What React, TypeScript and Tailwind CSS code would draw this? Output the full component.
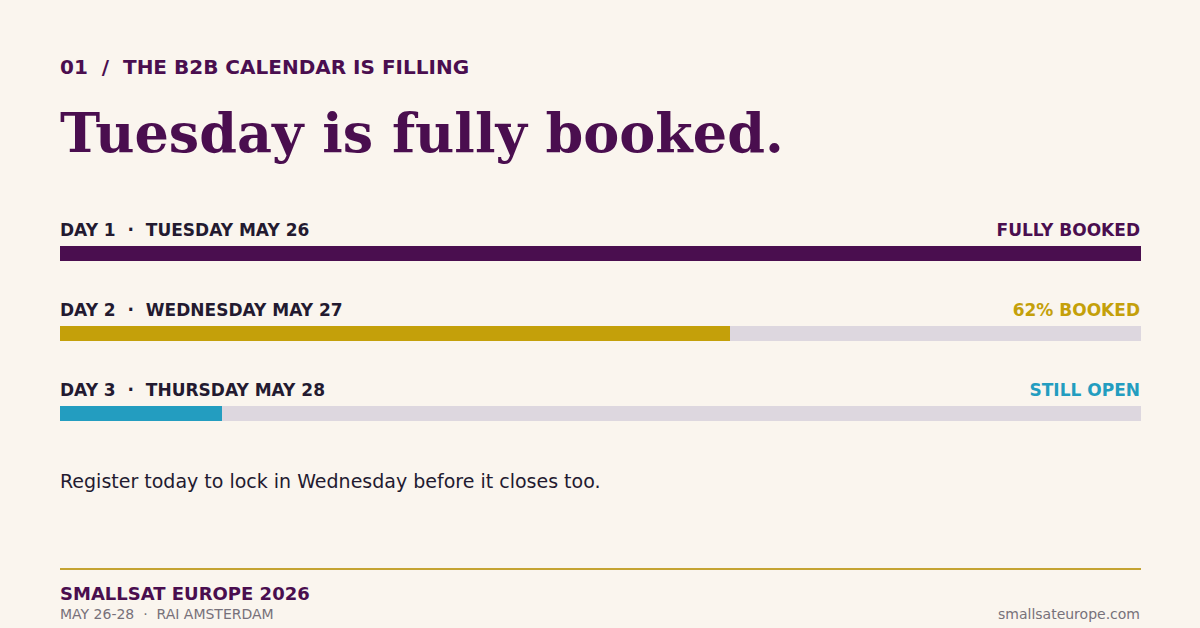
const days = [
  {
    label: "DAY 1  ·  TUESDAY MAY 26",
    status: "FULLY BOOKED",
    pct: 100,
    bar: "bg-[#4a0e4f]",
    text: "text-[#4a0e4f]",
  },
  {
    label: "DAY 2  ·  WEDNESDAY MAY 27",
    status: "62% BOOKED",
    pct: 62,
    bar: "bg-[#c4a00a]",
    text: "text-[#c4a00a]",
  },
  {
    label: "DAY 3  ·  THURSDAY MAY 28",
    status: "STILL OPEN",
    pct: 15,
    bar: "bg-[#239dc0]",
    text: "text-[#239dc0]",
  },
];

export default function App() {
  return (
    <div
      className="w-[1200px] h-[628px] overflow-hidden bg-[#faf5ee] pl-[60px] pr-[59px] pt-[55px]"
      style={{ fontFamily: '"DejaVu Sans", Verdana, sans-serif' }}
    >
      {/* Eyebrow */}
      <div className="whitespace-pre text-[20px] leading-[24px] font-bold text-[#4a0e4f]">
        01  /  THE B2B CALENDAR IS FILLING
      </div>

      {/* Headline */}
      <h1
        className="mt-[27px] text-[54px] leading-[54px] font-bold text-[#4a0e4f]"
        style={{ fontFamily: '"DejaVu Serif", Georgia, serif' }}
      >
        Tuesday is fully booked.
      </h1>

      {/* Day bars */}
      <div className="mt-[60px] flex flex-col gap-[39px]">
        {days.map((d) => (
          <div key={d.label}>
            <div className="flex items-center justify-between text-[17px] leading-[20px] font-bold">
              <span className="whitespace-pre text-[#231a30]">{d.label}</span>
              <span className={`pr-px ${d.text}`}>{d.status}</span>
            </div>
            <div className="mt-[6px] h-[15px] bg-[#ddd7df]">
              <div className={`h-full ${d.bar}`} style={{ width: `${d.pct}%` }} />
            </div>
          </div>
        ))}
      </div>

      {/* Call to action */}
      <p className="mt-[48px] text-[19px] leading-[24px] text-[#231a30]">
        Register today to lock in Wednesday before it closes too.
      </p>

      {/* Footer */}
      <div className="mt-[75px] border-t-2 border-[#c4a332] pt-[13px] flex items-end justify-between">
        <div>
          <div className="text-[18px] leading-[22px] font-bold text-[#4a0e4f]">
            SMALLSAT EUROPE 2026
          </div>
          <div className="whitespace-pre text-[14px] leading-[18px] text-[#77717a]">
            MAY 26-28  ·  RAI AMSTERDAM
          </div>
        </div>
        <div className="pr-px text-[14px] leading-[18px] text-[#77717a]">smallsateurope.com</div>
      </div>
    </div>
  );
}
